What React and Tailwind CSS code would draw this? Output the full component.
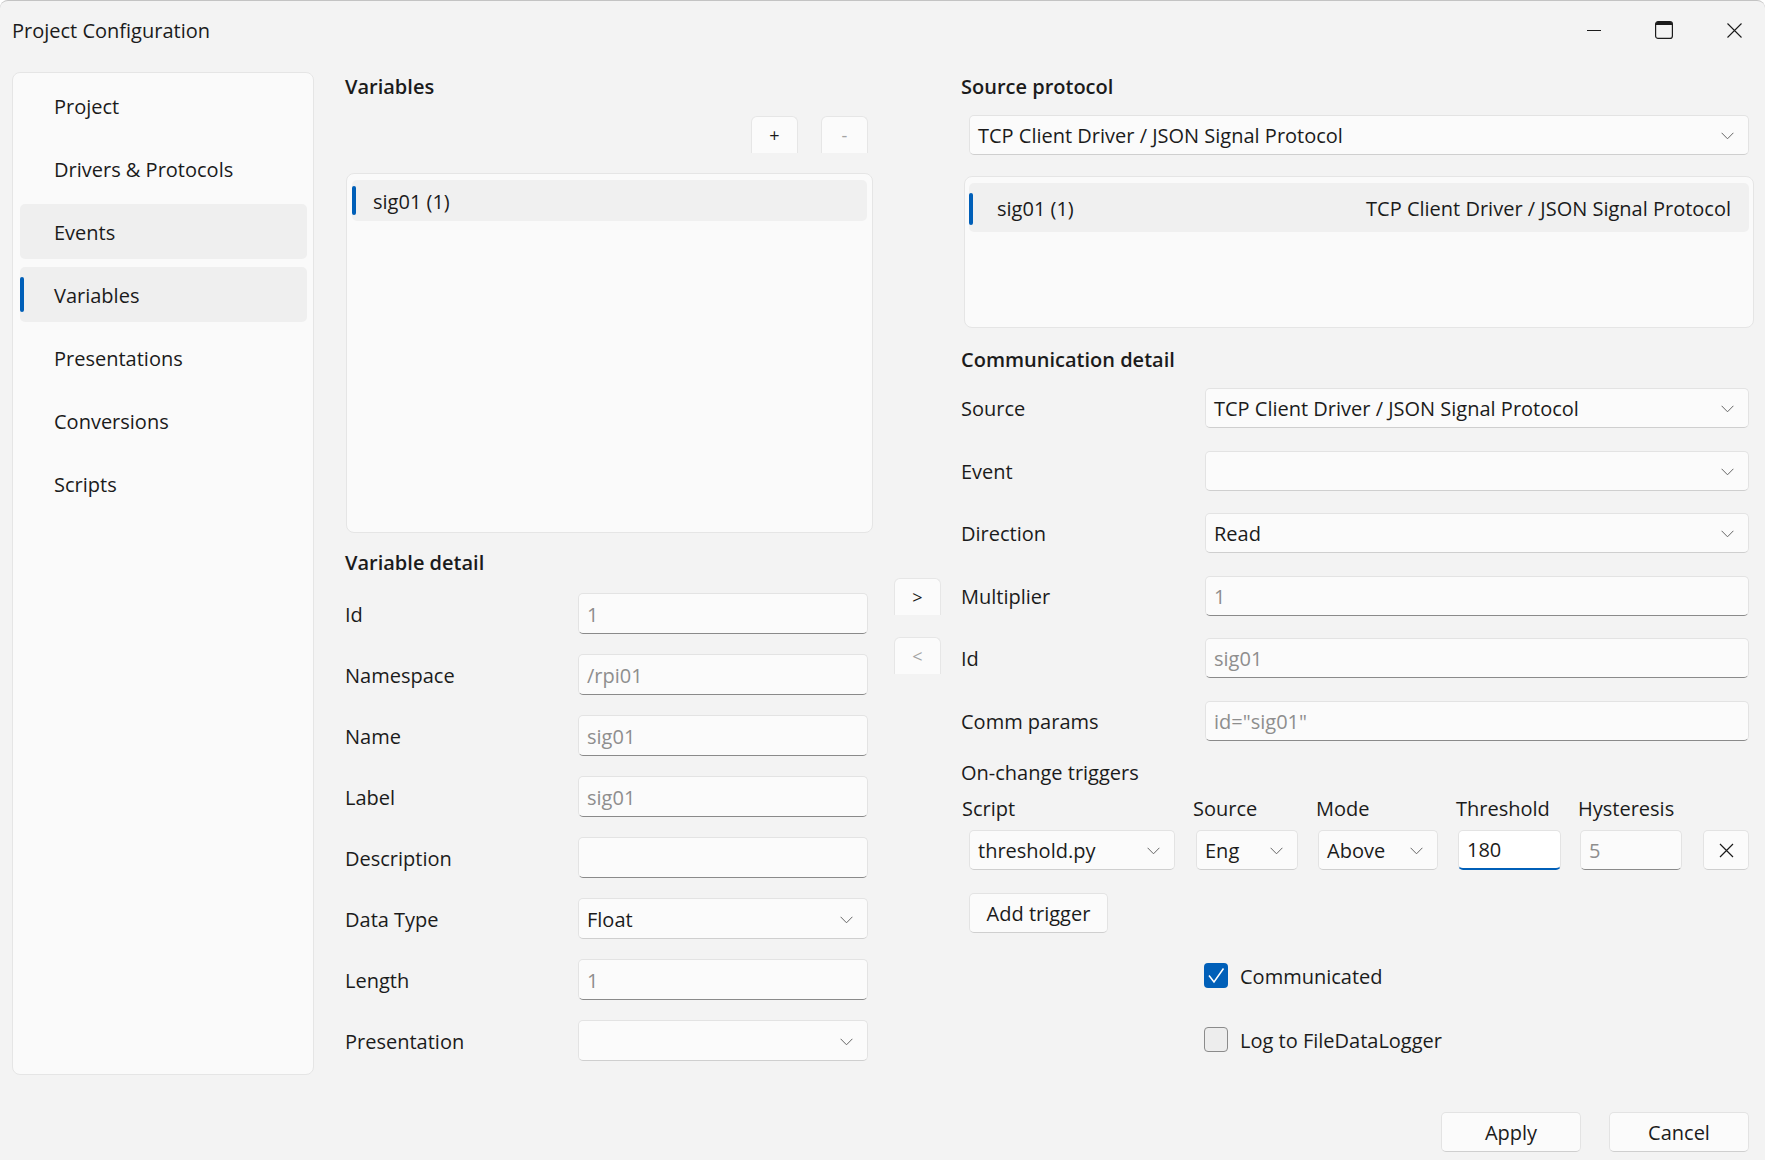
import { Fragment } from 'react'

const navItems = ['Project', 'Drivers & Protocols', 'Events', 'Variables', 'Presentations', 'Conversions', 'Scripts']

const variableRows = [
  { label: 'Id', type: 'text', value: '1' },
  { label: 'Namespace', type: 'text', value: '/rpi01' },
  { label: 'Name', type: 'text', value: 'sig01' },
  { label: 'Label', type: 'text', value: 'sig01' },
  { label: 'Description', type: 'text', value: '' },
  { label: 'Data Type', type: 'combo', value: 'Float' },
  { label: 'Length', type: 'text', value: '1' },
  { label: 'Presentation', type: 'combo', value: '' },
]

const commRows = [
  { label: 'Source', type: 'combo', value: 'TCP Client Driver / JSON Signal Protocol' },
  { label: 'Event', type: 'combo', value: '' },
  { label: 'Direction', type: 'combo', value: 'Read' },
  { label: 'Multiplier', type: 'text', value: '1' },
  { label: 'Id', type: 'text', value: 'sig01' },
  { label: 'Comm params', type: 'text', value: 'id="sig01"' },
]

function Chevron() {
  return (
    <svg width="13" height="8" viewBox="0 0 13 8" className="shrink-0">
      <path d="M0.6 0.8 L6.5 6.8 L12.4 0.8" fill="none" stroke="#666666" strokeWidth="1" />
    </svg>
  )
}

function ComboBox({ value, className = '' }) {
  return (
    <div className={`h-full flex items-center justify-between pl-[8px] pr-[14px] pt-[2px] rounded-[5px] bg-[#fbfbfb] border border-[#e3e3e3] border-b-[#cfcfcf] text-[#1b1b1b] whitespace-nowrap ${className}`}>
      <span>{value}</span>
      <Chevron />
    </div>
  )
}

function TextBox({ value, className = '' }) {
  return (
    <div className={`h-full flex items-center pl-[8px] pt-[2px] rounded-[5px] bg-[#fbfbfb] border border-[#e3e3e3] border-b-[#8a8a8a] text-[#8e8e8e] whitespace-nowrap ${className}`}>
      {value}
    </div>
  )
}

function Button({ children, className = '' }) {
  return (
    <div className={`flex items-center justify-center pt-[2px] rounded-[5px] bg-[#fbfbfb] border border-[#e3e3e3] border-b-[#cfcfcf] text-[#1b1b1b] ${className}`}>
      {children}
    </div>
  )
}

// small buttons that are cut off at the bottom by their container
function ClippedButton({ children, disabled }) {
  return (
    <div className={`w-[47px] h-[37px] flex items-center justify-center rounded-t-[6px] border-t border-x border-[#e6e6e6] bg-[#fbfbfb] text-[18px] ${disabled ? 'text-[#a3a3a3]' : 'text-[#1b1b1b]'}`}>
      {children}
    </div>
  )
}

function Field({ row }) {
  return row.type === 'combo' ? <ComboBox value={row.value} /> : <TextBox value={row.value} />
}

export default function App() {
  return (
    <div className="w-[1765px] h-[1160px] bg-[#f3f3f3] border-t border-[#c3c3c3] rounded-t-[8px] overflow-hidden flex flex-col text-[20px] text-[#1b1b1b] font-['Open_Sans','Noto_Sans',sans-serif]">
      {/* title bar */}
      <div className="h-[71px] shrink-0">
        <div className="h-[58px] flex items-center pl-[12px]">
          <span className="pt-[2px]">Project Configuration</span>
          <div className="ml-auto flex items-center gap-[54px] pr-[23px]">
            <svg width="14" height="14" viewBox="0 0 14 14">
              <path d="M0 7.5 H14" stroke="#1b1b1b" strokeWidth="1" />
            </svg>
            <svg width="18" height="18" viewBox="0 0 18 18">
              <rect x="0.6" y="0.6" width="16.8" height="16.8" rx="2.5" fill="none" stroke="#1b1b1b" strokeWidth="1.2" />
              <path d="M1 2.5 Q1 1 2.5 1 H15.5 Q17 1 17 2.5 V4 H1 Z" fill="#1b1b1b" />
            </svg>
            <svg width="15" height="15" viewBox="0 0 15 15">
              <path d="M0.5 0.5 L14.5 14.5 M14.5 0.5 L0.5 14.5" stroke="#1b1b1b" strokeWidth="1.1" />
            </svg>
          </div>
        </div>
      </div>

      <div className="flex flex-1 items-start">
        {/* navigation */}
        <div className="ml-[12px] w-[302px] h-[1003px] shrink-0 rounded-[8px] border border-[#e5e5e5] bg-[#fafafa] pt-[5px] pl-[7px] pr-[6px] flex flex-col gap-[8px]">
          {navItems.map(item => {
            const active = item === 'Variables'
            const shaded = active || item === 'Events'
            return (
              <div key={item} className={`h-[55px] shrink-0 rounded-[5px] flex items-center ${shaded ? 'bg-[#efefef]' : ''}`}>
                <div className={`w-[4px] h-[35px] rounded-full ${active ? 'bg-[#005fb8]' : ''}`} />
                <span className="ml-[30px] pt-[2px]">{item}</span>
              </div>
            )
          })}
        </div>

        {/* variables column */}
        <div className="ml-[31px] w-[528px] shrink-0 flex flex-col">
          <div className="h-[30px] flex items-center font-semibold">Variables</div>
          <div className="mt-[14px] h-[37px] flex justify-end gap-[23px] pr-[5px]">
            <ClippedButton>+</ClippedButton>
            <ClippedButton disabled>-</ClippedButton>
          </div>
          <div className="mt-[20px] ml-[1px] h-[360px] rounded-[8px] border border-[#e5e5e5] bg-[#fafafa] pt-[6px] px-[5px]">
            <div className="h-[41px] rounded-[5px] bg-[#f0f0f0] flex items-center">
              <div className="w-[4px] h-[29px] rounded-full bg-[#005fb8]" />
              <span className="ml-[17px] pt-[2px]">sig01 (1)</span>
            </div>
          </div>
          <div className="mt-[15px] h-[30px] flex items-center font-semibold">Variable detail</div>
          <div className="mt-[15px] flex flex-col gap-[20px]">
            {variableRows.map(row => (
              <div key={row.label} className="h-[41px] flex items-center">
                <span className="w-[233px] shrink-0 pt-[2px]">{row.label}</span>
                <div className="w-[290px] h-full">
                  <Field row={row} />
                </div>
              </div>
            ))}
          </div>
        </div>

        {/* move buttons */}
        <div className="ml-[21px] w-[47px] shrink-0 flex flex-col pt-[506px] gap-[22px]">
          <ClippedButton>&gt;</ClippedButton>
          <ClippedButton disabled>&lt;</ClippedButton>
        </div>

        {/* source / communication column */}
        <div className="ml-[20px] w-[793px] shrink-0 flex flex-col">
          <div className="h-[30px] flex items-center font-semibold">Source protocol</div>
          <div className="mt-[13px] ml-[8px] w-[780px] h-[40px]">
            <ComboBox value="TCP Client Driver / JSON Signal Protocol" />
          </div>
          <div className="mt-[21px] ml-[3px] w-[790px] h-[152px] rounded-[8px] border border-[#e5e5e5] bg-[#fafafa] pt-[6px] px-[4px]">
            <div className="h-[49px] rounded-[5px] bg-[#f0f0f0] flex items-center pr-[18px] pt-[2px]">
              <div className="w-[4px] h-[32px] rounded-full bg-[#005fb8]" />
              <span className="ml-[24px]">sig01 (1)</span>
              <span className="ml-auto">TCP Client Driver / JSON Signal Protocol</span>
            </div>
          </div>

          <div className="mt-[17px] h-[30px] flex items-center font-semibold">Communication detail</div>
          <div className="mt-[13px] flex flex-col gap-[22.6px]">
            {commRows.map(row => (
              <div key={row.label} className="h-[40px] flex items-center">
                <span className="w-[244px] shrink-0 pt-[2px]">{row.label}</span>
                <div className="w-[544px] h-full">
                  <Field row={row} />
                </div>
              </div>
            ))}
          </div>

          <div className="mt-[17px] h-[30px] flex items-center">On-change triggers</div>
          <div className="mt-[7px] h-[26px] flex items-center pl-[1px] pt-[2px]">
            <span className="w-[231px]">Script</span>
            <span className="w-[123px]">Source</span>
            <span className="w-[140px]">Mode</span>
            <span className="w-[122px]">Threshold</span>
            <span>Hysteresis</span>
          </div>
          <div className="mt-[9px] h-[40px] flex pl-[8px]">
            <div className="w-[206px]"><ComboBox value="threshold.py" /></div>
            <div className="ml-[21px] w-[102px]"><ComboBox value="Eng" /></div>
            <div className="ml-[20px] w-[120px]"><ComboBox value="Above" /></div>
            <div className="ml-[20px] w-[103px] h-full flex items-center pl-[8px] pt-[2px] rounded-[5px] bg-white border border-[#e3e3e3] border-b-2 border-b-[#005fb8]">180</div>
            <div className="ml-[19px] w-[102px]"><TextBox value="5" /></div>
            <Button className="ml-[21px] w-[46px]">
              <svg width="15" height="15" viewBox="0 0 15 15">
                <path d="M1 1 L14 14 M14 1 L1 14" stroke="#1b1b1b" strokeWidth="1.2" />
              </svg>
            </Button>
          </div>
          <Button className="mt-[23px] ml-[8px] w-[139px] h-[40px]">Add trigger</Button>

          <div className="mt-[30px] ml-[243px] h-[26px] flex items-center">
            <div className="w-[24px] h-[25px] rounded-[4px] bg-[#005fb8] flex items-center justify-center">
              <svg width="24" height="25" viewBox="0 0 24 25">
                <path d="M5 12.5 L10 19 L19.5 5.5" fill="none" stroke="white" strokeWidth="1.5" />
              </svg>
            </div>
            <span className="ml-[12px] pt-[2px]">Communicated</span>
          </div>
          <div className="mt-[38px] ml-[243px] h-[26px] flex items-center">
            <div className="w-[24px] h-[25px] rounded-[4px] bg-[#ededed] border border-[#8b8b8b]" />
            <span className="ml-[12px] pt-[2px]">Log to FileDataLogger</span>
          </div>

          <div className="mt-[59px] h-[40px] flex justify-end gap-[28px] pr-[5px]">
            <Button className="w-[140px]">Apply</Button>
            <Button className="w-[140px]">Cancel</Button>
          </div>
        </div>
      </div>
    </div>
  )
}
